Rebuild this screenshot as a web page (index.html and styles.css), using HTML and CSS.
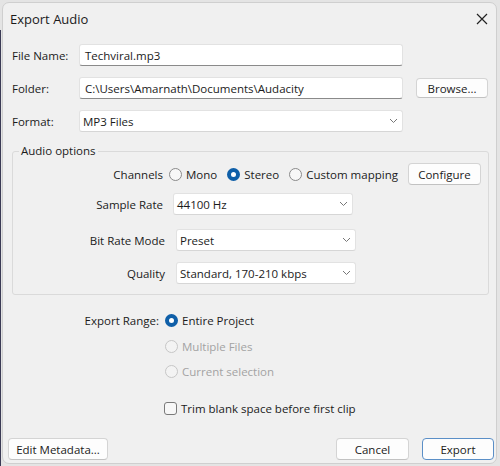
FILE: index.html
```html
<!DOCTYPE html>
<html>
<head>
<meta charset="utf-8">
<link rel="stylesheet" href="styles.css">
</head>
<body>
<div class="dialog">
  <div class="titlebar">
    <span class="title">Export Audio</span>
    <svg class="close" width="12" height="12" viewBox="0 0 12 12"><path d="M1 1 L11 11 M11 1 L1 11" stroke="#222" stroke-width="1.2" fill="none"/></svg>
  </div>
  <div class="topgrid">
    <label class="lbl">File Name:</label>
    <div class="field">Techviral.mp3</div>
    <span></span>
    <label class="lbl">Folder:</label>
    <div class="field">C:\Users\Amarnath\Documents\Audacity</div>
    <button class="btn browse">Browse...</button>
    <label class="lbl">Format:</label>
    <div class="field select">MP3 Files<svg class="chev" width="9" height="6" viewBox="0 0 9 6"><path d="M1 1 L4.5 4.5 L8 1" stroke="#777" stroke-width="1" fill="none"/></svg></div>
    <span></span>
  </div>
  <fieldset class="group">
    <legend>Audio options</legend>
    <div class="orow channels">
      <span class="olbl">Channels</span>
      <div class="radios">
        <span class="radio"><i class="rb"></i>Mono</span>
        <span class="radio"><i class="rb on"></i>Stereo</span>
        <span class="radio"><i class="rb"></i>Custom mapping</span>
        <button class="btn configure">Configure</button>
      </div>
    </div>
    <div class="orow rate">
      <span class="olbl">Sample Rate</span>
      <div class="field select small">44100 Hz<svg class="chev" width="9" height="6" viewBox="0 0 9 6"><path d="M1 1 L4.5 4.5 L8 1" stroke="#777" stroke-width="1" fill="none"/></svg></div>
    </div>
    <div class="orow mode shifted">
      <span class="olbl">Bit Rate Mode</span>
      <div class="field select small">Preset<svg class="chev" width="9" height="6" viewBox="0 0 9 6"><path d="M1 1 L4.5 4.5 L8 1" stroke="#777" stroke-width="1" fill="none"/></svg></div>
    </div>
    <div class="orow quality shifted">
      <span class="olbl">Quality</span>
      <div class="field select small">Standard, 170-210 kbps<svg class="chev" width="9" height="6" viewBox="0 0 9 6"><path d="M1 1 L4.5 4.5 L8 1" stroke="#777" stroke-width="1" fill="none"/></svg></div>
    </div>
  </fieldset>
  <div class="range">
    <span class="rlbl">Export Range:</span>
    <div class="rlist">
      <span class="radio"><i class="rb on"></i>Entire Project</span>
      <span class="radio disabled"><i class="rb"></i>Multiple Files</span>
      <span class="radio disabled"><i class="rb"></i>Current selection</span>
    </div>
  </div>
  <div class="trim">
    <span class="check"><i class="cb"></i>Trim blank space before first clip</span>
  </div>
  <div class="footer">
    <button class="btn meta">Edit Metadata...</button>
    <div class="right">
      <button class="btn cancel">Cancel</button>
      <button class="btn export">Export</button>
    </div>
  </div>
</div>
</body>
</html>
```
FILE: styles.css
```css
html, body {
  margin: 0;
  padding: 0;
  width: 500px;
  height: 466px;
  overflow: hidden;
}
body {
  background: linear-gradient(#3b3b55, #3b3b55) 0 30px / 1px 100% no-repeat, #e4e4e4;
  font-family: "Open Sans", "Noto Sans", sans-serif;
  font-size: 11.5px;
  color: #1b1b1b;
  padding: 2px 3px 2px 2px;
  box-sizing: border-box;
}
.dialog {
  box-sizing: border-box;
  height: 462px;
  background: #f0f0f0;
  border: 1px solid #cfcfcf;
  border-radius: 7px;
  display: flex;
  flex-direction: column;
}
.titlebar {
  height: 31px;
  display: flex;
  align-items: center;
  justify-content: space-between;
  padding: 0 8px 0 7px;
}
.title {
  font-size: 13px;
  color: #1a1a1a;
}
.topgrid {
  display: grid;
  grid-template-columns: 67px 324px 72px;
  grid-auto-rows: 22px;
  row-gap: 11px;
  padding: 10px 0 0 9px;
  align-items: center;
}
.browse { margin-left: 13px; }
.field {
  box-sizing: border-box;
  height: 22px;
  background: #fff;
  border: 1px solid #e2e2e2;
  border-bottom-color: #8a8a8a;
  border-radius: 3px;
  padding: 0 5px;
  display: flex;
  align-items: center;
  white-space: nowrap;
}
.select {
  justify-content: space-between;
  border-bottom-color: #d6d6d6;
  padding: 0 3px;
}
.chev { margin-right: 1px; }
.btn {
  box-sizing: border-box;
  height: 22px;
  background: #fdfdfd;
  border: 1px solid #d4d4d4;
  border-bottom-color: #c2c2c2;
  border-radius: 4px;
  font-family: inherit;
  font-size: 11.5px;
  color: #1b1b1b;
  padding: 0;
}
.browse { width: 72px; height: 20px; }
.group {
  margin: 11px 7px 0 9px;
  padding: 4px 0 10px 0;
  border: 1px solid #dadada;
  border-radius: 3px;
  min-width: 0;
}
.group legend {
  margin-left: 6px;
  padding: 0 2px;
  line-height: 16px;
}
.orow {
  display: grid;
  grid-template-columns: 150px auto;
  column-gap: 10px;
  align-items: center;
  height: 22px;
}
.olbl { text-align: right; }
.rate { margin-top: 8px; }
.mode { margin-top: 14px; }
.quality { margin-top: 11px; }
.shifted { grid-template-columns: 152px auto; column-gap: 11px; }
.small { width: 180px; }
.channels { column-gap: 6px; }
.radios {
  display: flex;
  align-items: center;
  gap: 10px;
}
.radio {
  display: inline-flex;
  align-items: center;
  gap: 4px;
  white-space: nowrap;
}
.rb {
  box-sizing: border-box;
  width: 13px;
  height: 13px;
  border-radius: 50%;
  border: 1px solid #8a8a8a;
  background: #f7f7f7;
  display: inline-block;
}
.rb.on {
  border: 4px solid #0f5fa8;
  background: #fff;
}
.disabled { color: #a3a3a3; }
.disabled .rb { border-color: #c6c6c6; background: #f3f3f3; }
.configure { width: 73px; margin-left: 0; }
.range {
  display: grid;
  grid-template-columns: 156px auto;
  column-gap: 6px;
  margin-top: 17px;
}
.rlbl { text-align: right; line-height: 17px; }
.rlist {
  display: flex;
  flex-direction: column;
  gap: 8.5px;
}
.rlist .radio { line-height: 17px; }
.trim {
  margin-top: 21px;
  padding-left: 161px;
}
.check {
  display: inline-flex;
  align-items: center;
  gap: 4px;
}
.cb {
  box-sizing: border-box;
  width: 13px;
  height: 13px;
  border: 1px solid #7a7a7a;
  border-radius: 3px;
  background: #f7f7f7;
  display: inline-block;
}
.footer {
  margin-top: auto;
  display: flex;
  justify-content: space-between;
  padding: 0 2px 3px 5px;
}
.meta { width: 100px; }
.right { display: flex; gap: 13px; }
.cancel { width: 73px; }
.export { width: 72px; border-color: #5b8fc7; }
```
